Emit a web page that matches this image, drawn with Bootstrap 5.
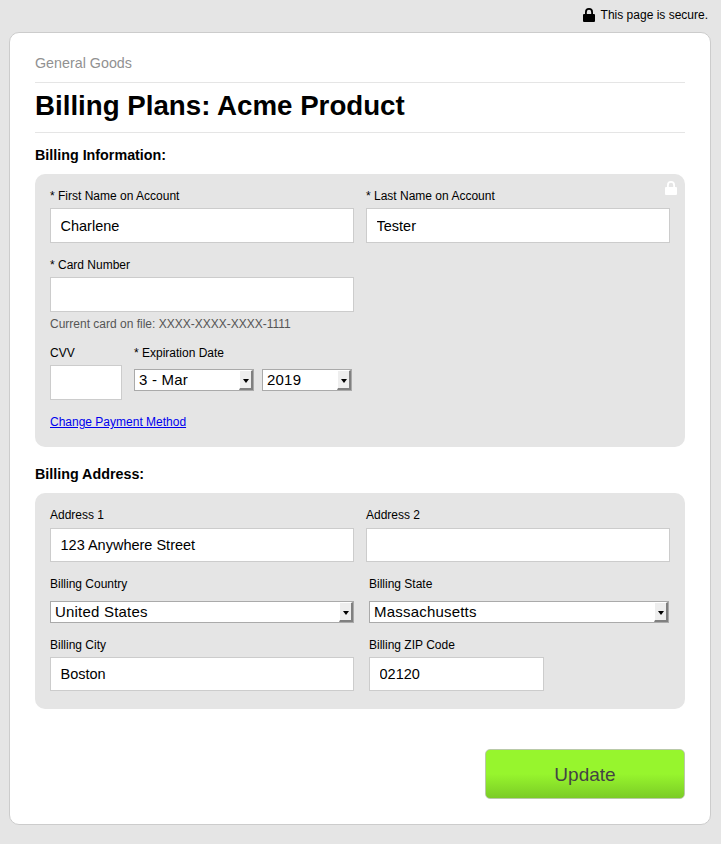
<!DOCTYPE html>
<html lang="en">
<head>
<meta charset="utf-8">
<title>Billing Plans</title>
<link href="https://cdn.jsdelivr.net/npm/bootstrap@5.3.0/dist/css/bootstrap.min.css" rel="stylesheet">
<style>
html,body{height:100%;}
body{background:#e5e5e5;font-family:"Liberation Sans",Arial,sans-serif;color:#000;font-size:12px;line-height:14px;overflow:hidden;}
.page-wrap{width:721px;height:844px;padding:8px 10px 0 9px;}
.secure-note{height:24px;justify-content:flex-end;align-items:flex-start;gap:6px;padding-right:3px;line-height:15px;}
.sheet{height:793px;background:#fff;border:1px solid #ccc;border-radius:10px;padding:22px 25px 0 25px;}
.org-name{color:#919191;font-size:14.3px;line-height:16px;padding-bottom:11px;border-bottom:1px solid #e5e5e5;}
.plan-title{font-size:27.7px;line-height:31px;font-weight:700;margin:0;padding:7px 0 11px;border-bottom:1px solid #e5e5e5;}
.sec-title{font-size:14.3px;line-height:16px;font-weight:700;margin:0;}
.sec-info{margin-top:14px;}
.sec-addr{margin-top:19px;}
.box{position:relative;background:#e5e5e5;border-radius:10px;padding:15px 15px 0;}
.box-info{height:273px;margin-top:11px;}
.box-addr{height:216px;margin-top:11px;}
.tb{display:block;height:35px;width:304px;background:#fff;border:1px solid #ccc;border-radius:0;font-size:14.5px;line-height:16px;padding:0 9.5px;color:#000;font-family:inherit;}
.tb:focus{outline:none;box-shadow:none;border-color:#ccc;}
.tb-short{width:72px;}
.tb-zip{width:175px;}
.tb-low{height:34px;}
.tb-drop{margin-top:6px;}
.fld-label{display:block;margin:0 0 5px;line-height:14px;}
.fld-row{display:flex;gap:12px;}
.fld-row-wide{gap:15px;}
.fake-select{position:relative;height:22px;background:#fff;border:1px solid #aaa;font-size:15px;line-height:20px;padding-left:4px;letter-spacing:.2px;}
.fake-select .arrow{position:absolute;right:0;top:0;width:14px;height:20px;background:#eee;border-right:2px solid #808080;border-bottom:2px solid #808080;border-top:1px solid #fff;border-left:1px solid #fff;}
.fake-select .arrow::after{content:"";position:absolute;left:3px;top:8px;border:3px solid transparent;border-top:4px solid #000;border-bottom:0;}
.sel-month{width:120px;}
.sel-year{width:90px;}
.sel-wide{width:304px;}
.sel-state{width:300px;}
.spaced{margin-top:15px;}
.sel-gap{margin-top:10px;}
.hint{color:#555;margin:5px 0 0;line-height:14px;}
.cvv-row{gap:12px;}
.exp-sels{gap:8px;margin-top:9px;}
.change-link{color:#00e;text-decoration:underline;display:block;}
.box-lock{position:absolute;right:8px;top:7px;}
.btn-row{margin-top:40px;}
.go-btn{width:200px;height:50px;border:1px solid #b9c9a8;border-radius:5px;background:linear-gradient(#97f52d 0%,#97f52d 50%,#7bcc26 100%);color:#444;font-size:19px;line-height:24px;padding:2px 0 0;}
.go-btn:hover,.go-btn:active{background:linear-gradient(#97f52d 0%,#97f52d 50%,#7bcc26 100%);color:#444;}
</style>
</head>
<body>
<div class="page-wrap">
  <div class="secure-note d-flex">
    <svg width="12" height="14" viewBox="0 0 12 14"><path fill="#000" fill-rule="evenodd" d="M2 6V4.2a4 4.2 0 0 1 8 0V6h1a1 1 0 0 1 1 1v6a1 1 0 0 1-1 1H1a1 1 0 0 1-1-1V7a1 1 0 0 1 1-1zM3.8 6h4.4V4.2a2.2 2.4 0 0 0-4.4 0z"/></svg>
    <span>This page is secure.</span>
  </div>
  <div class="sheet">
    <div class="org-name">General Goods</div>
    <h1 class="plan-title">Billing Plans: Acme Product</h1>
    <h2 class="sec-title sec-info">Billing Information:</h2>
    <div class="box box-info">
      <svg class="box-lock" width="12" height="14" viewBox="0 0 12 14"><path fill="#fff" fill-rule="evenodd" d="M2 6V4.2a4 4.2 0 0 1 8 0V6h1a1 1 0 0 1 1 1v6a1 1 0 0 1-1 1H1a1 1 0 0 1-1-1V7a1 1 0 0 1 1-1zM3.8 6h4.4V4.2a2.2 2.4 0 0 0-4.4 0z"/></svg>
      <div class="fld-row">
        <div><label class="fld-label">* First Name on Account</label><input class="tb" value="Charlene"></div>
        <div><label class="fld-label">* Last Name on Account</label><input class="tb" value="Tester"></div>
      </div>
      <div class="spaced">
        <label class="fld-label">* Card Number</label>
        <input class="tb">
        <p class="hint">Current card on file: XXXX-XXXX-XXXX-1111</p>
      </div>
      <div class="d-flex cvv-row spaced">
        <div><label class="fld-label">CVV</label><input class="tb tb-short"></div>
        <div>
          <label class="fld-label">* Expiration Date</label>
          <div class="d-flex exp-sels">
            <div class="fake-select sel-month">3 - Mar<span class="arrow"></span></div>
            <div class="fake-select sel-year">2019<span class="arrow"></span></div>
          </div>
        </div>
      </div>
      <a class="change-link spaced" href="#">Change Payment Method</a>
    </div>
    <h2 class="sec-title sec-addr">Billing Address:</h2>
    <div class="box box-addr">
      <div class="fld-row">
        <div><label class="fld-label">Address 1</label><input class="tb tb-low tb-drop" value="123 Anywhere Street"></div>
        <div><label class="fld-label">Address 2</label><input class="tb tb-low tb-drop"></div>
      </div>
      <div class="fld-row fld-row-wide spaced">
        <div><label class="fld-label">Billing Country</label><div class="fake-select sel-wide sel-gap">United States<span class="arrow"></span></div></div>
        <div><label class="fld-label">Billing State</label><div class="fake-select sel-state sel-gap">Massachusetts<span class="arrow"></span></div></div>
      </div>
      <div class="fld-row fld-row-wide spaced">
        <div><label class="fld-label">Billing City</label><input class="tb tb-low" value="Boston"></div>
        <div><label class="fld-label">Billing ZIP Code</label><input class="tb tb-low tb-zip" value="02120"></div>
      </div>
    </div>
    <div class="d-flex justify-content-end btn-row"><button type="button" class="btn go-btn">Update</button></div>
  </div>
</div>
<script src="https://cdn.jsdelivr.net/npm/bootstrap@5.3.0/dist/js/bootstrap.bundle.min.js"></script>
</body>
</html>
